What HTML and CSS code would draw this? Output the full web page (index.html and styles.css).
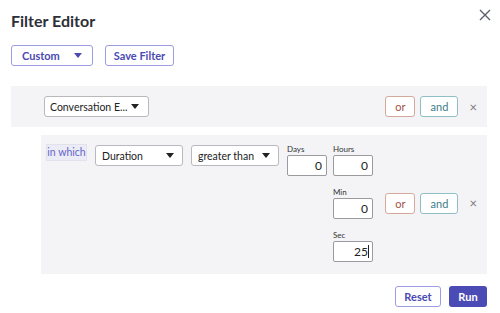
FILE: index.html
```html
<!DOCTYPE html>
<html lang="en">
<head>
  <meta charset="UTF-8" />
  <title>Filter Editor</title>
  <link rel="stylesheet" href="styles.css">
</head>
<body>

  <div class="header">
    <h1>Filter Editor</h1>
    <button class="close-btn" aria-label="Close">
      <svg width="12" height="12" viewBox="0 0 12 12"><path d="M1 1L11 11M11 1L1 11" stroke="#5a5f6b" stroke-width="1.4" fill="none"/></svg>
    </button>
  </div>

  <div class="toolbar">
    <button class="outline-btn custom-btn">Custom <span class="caret"></span></button>
    <button class="outline-btn save-btn">Save Filter</button>
  </div>

  <div class="group group-top">
    <div class="group-body">
      <div class="select wide">Conversation E... <span class="caret"></span></div>
    </div>
    <div class="actions">
      <button class="or-btn">or</button>
      <button class="and-btn">and</button>
      <span class="remove">&#215;</span>
    </div>
  </div>

  <div class="group group-sub">
    <div class="group-body">
      <span class="in-which">in which</span>
      <div class="select">Duration <span class="caret"></span></div>
      <div class="select">greater than <span class="caret"></span></div>
      <div class="time-grid">
        <label class="field">
          <span>Days</span>
          <input type="text" value="0">
        </label>
        <label class="field">
          <span>Hours</span>
          <input type="text" value="0">
        </label>
        <label class="field col2">
          <span>Min</span>
          <input type="text" value="0">
        </label>
        <label class="field col2">
          <span>Sec</span>
          <span class="input-wrap">
            <input type="text" value="25">
            <i class="text-caret"></i>
          </span>
        </label>
      </div>
    </div>
    <div class="actions">
      <button class="or-btn">or</button>
      <button class="and-btn">and</button>
      <span class="remove">&#215;</span>
    </div>
  </div>

  <div class="footer">
    <button class="outline-btn">Reset</button>
    <button class="run-btn">Run</button>
  </div>

</body>
</html>
```

FILE: styles.css
```css
body {
  font-family: Lato, "Open Sans", Arial, sans-serif;
  margin: 0;
  padding: 10px 13px 0 11px;
  background-color: #fff;
  color: #2f3239;
}
button {
  font-family: inherit;
  cursor: pointer;
}
.header {
  display: flex;
  justify-content: space-between;
  align-items: flex-start;
  height: 35px;
}
h1 {
  margin: 1px 0 0;
  font-size: 16px;
  font-weight: 700;
  color: #2d3038;
}
.close-btn {
  border: none;
  background: none;
  padding: 0;
  margin: -2px -4px 0 0;
  width: 12px;
  height: 12px;
}
.toolbar {
  display: flex;
  gap: 12px;
  height: 21px;
  margin-bottom: 20px;
}
.outline-btn {
  height: 21px;
  padding: 0 10px;
  border: 1px solid #9c9ce3;
  border-radius: 3px;
  background: #fff;
  color: #4a4ab2;
  font-size: 11px;
  font-weight: 700;
}
.save-btn {
  width: 69px;
  padding: 0;
}
.custom-btn {
  width: 82px;
  display: flex;
  justify-content: space-between;
  align-items: center;
  padding: 0 10px 0 10px;
}
.custom-btn .caret {
  border-top-color: #4a4ab2;
}
.caret {
  width: 0;
  height: 0;
  border-left: 4px solid transparent;
  border-right: 4px solid transparent;
  border-top: 5px solid #222;
}
.group {
  display: flex;
  align-items: center;
  background-color: #f4f4f6;
}
.group-body {
  flex: 1;
  display: flex;
  align-items: flex-start;
}
.group-top {
  padding: 10px 0 10px 33px;
  margin-bottom: 8px;
}
.group-sub {
  margin-left: 30px;
  padding: 9px 0 12px 5px;
}
.select {
  height: 21px;
  box-sizing: border-box;
  width: 88px;
  padding: 0 8px 0 6px;
  border: 1px solid #b9b9bd;
  border-radius: 3px;
  background: #fff;
  font-size: 10.5px;
  color: #222;
  white-space: nowrap;
  display: flex;
  align-items: center;
  justify-content: space-between;
  margin-right: 8px;
}
.select.wide {
  width: 105px;
  padding: 0 9px 0 5px;
}
.group-sub .select {
  margin-top: 1px;
}
.in-which {
  height: 15px;
  width: 39px;
  padding: 0;
  margin-right: 8px;
  border: 1px solid #e2e2ee;
  background: #ececf6;
  color: #6565c9;
  font-size: 10.5px;
  line-height: 14px;
  text-align: center;
  white-space: nowrap;
}
.time-grid {
  display: grid;
  grid-template-columns: 40px 40px;
  column-gap: 6px;
  row-gap: 11px;
}
.col2 {
  grid-column: 2;
}
.field {
  display: flex;
  flex-direction: column;
  font-size: 8px;
  color: #333;
  line-height: 11px;
}
.field input {
  width: 40px;
  height: 21px;
  box-sizing: border-box;
  border: 1px solid #9b9b9f;
  border-radius: 2px;
  padding: 0 4px;
  text-align: right;
  font-family: inherit;
  font-size: 12px;
  color: #222;
}
.input-wrap {
  position: relative;
  display: block;
}
.text-caret {
  position: absolute;
  right: 4px;
  top: 4px;
  width: 1px;
  height: 13px;
  background: #222;
}
.actions {
  display: flex;
  align-items: center;
  gap: 5px;
  padding-right: 10px;
}
.or-btn, .and-btn {
  height: 21px;
  padding: 0;
  border-radius: 3px;
  background: #fff;
  font-size: 11px;
}
.or-btn {
  width: 30px;
  border: 1px solid #d5a89c;
  color: #a2533f;
}
.and-btn {
  width: 38px;
  border: 1px solid #8fbfc6;
  color: #3e7d88;
}
.remove {
  margin-left: 6px;
  font-size: 13px;
  color: #7a7a80;
}
.footer {
  display: flex;
  justify-content: flex-end;
  gap: 8px;
  margin-top: 12px;
}
.footer .outline-btn {
  width: 46px;
  height: 21px;
  padding: 0;
}
.run-btn {
  width: 38px;
  height: 21px;
  padding: 0;
  border: none;
  border-radius: 3px;
  background: #4b4bb5;
  color: #fff;
  font-size: 11px;
  font-weight: 700;
}
```
